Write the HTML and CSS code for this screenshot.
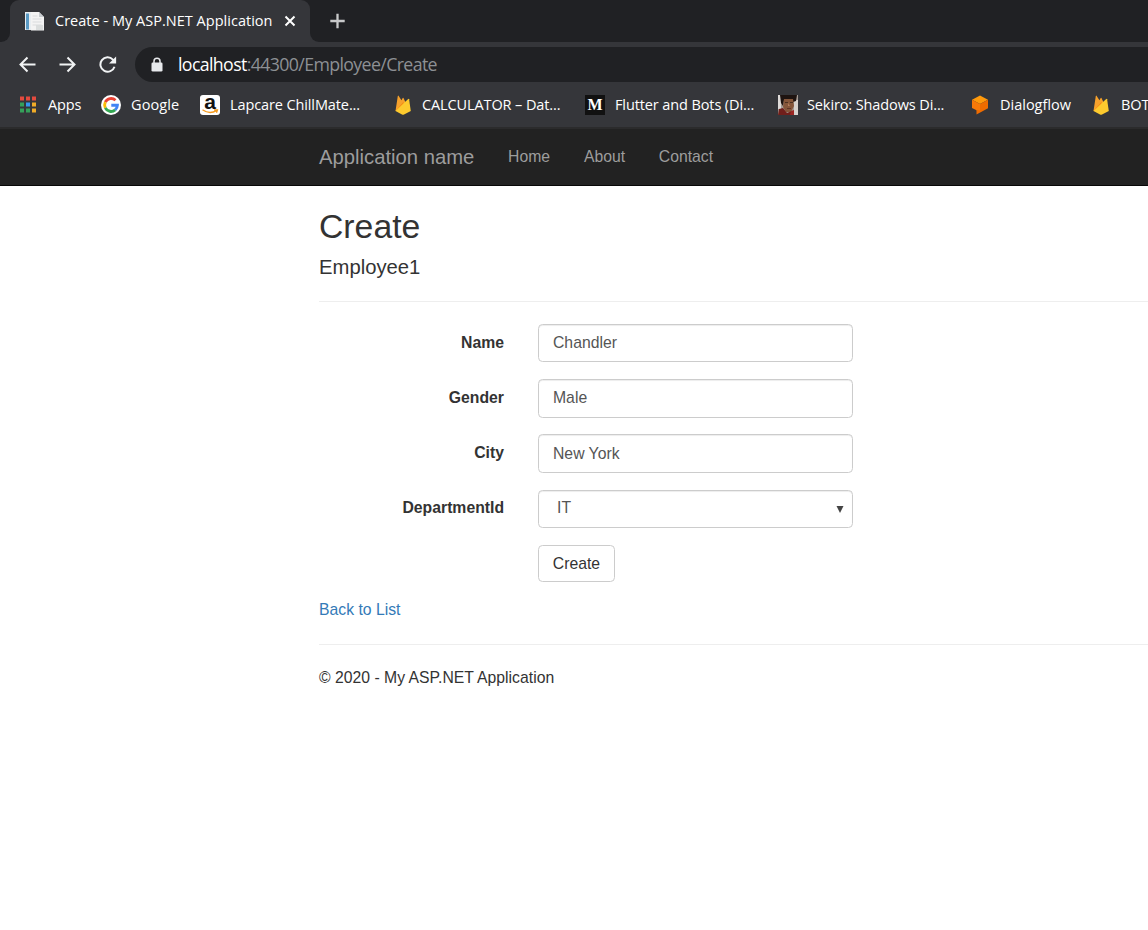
FILE: index.html
```html
<!DOCTYPE html>
<html lang="en">
<head>
<meta charset="utf-8">
<title>Create - My ASP.NET Application</title>
<link rel="stylesheet" href="styles.css">
</head>
<body>
<svg class="defs" width="0" height="0" aria-hidden="true">
  <symbol id="firebase" viewBox="0 0 20 20">
    <path d="M2.500 16 4.800 1q.3-.8.9 0L8.400 5.300l1.300-2.300q.4-.6.8 0L16.500 16z" fill="#f6a12c"/>
    <path d="M2.500 16 10.300 7 12 11z" fill="#f58a14"/>
    <path d="M2.500 16 15.200 4q.7-.5.9.3L17.800 16l-6.800 3.600q-1 .5-2 0z" fill="#fdca2e"/>
  </symbol>
</svg>
<header class="chrome">
  <div class="tabstrip">
    <div class="tab-edge"></div>
    <div class="tab">
      <svg class="page-icon" viewBox="0 0 21 20"><path d="M1 1h12v18H1z" fill="#e8edf0"/><path d="M2 2.500h3v16H2z" fill="#5a9ac4"/><path d="M7 1h8l5 5v13.500H7z" fill="#f3f3f3"/><path d="M15 1v5h5z" fill="#c8cccf"/><path d="M8.500 5h5M8.500 8h9M8.500 11h9M8.500 14h9" stroke="#dadcdd" stroke-width="1.200"/><path d="M12 14h7v5h-7z" fill="#dadddd"/></svg>
      <span class="tab-title">Create - My ASP.NET Application</span>
      <svg class="close" viewBox="0 0 12 12"><path d="M1.500 1.500l9 9M10.500 1.500l-9 9" stroke="#fff" stroke-width="2"/></svg>
    </div>
    <div class="tab-rest"><svg class="plus" viewBox="0 0 16 16"><path d="M7.500 .8v14.400M.3 8h14.400" stroke="#c8c9ca" stroke-width="2.300"/></svg></div>
  </div>
  <div class="toolbar">
    <svg class="nav-icon" viewBox="0 0 18 18"><path d="M16.500 8.500H2M8.500 1.500 1.500 8.500 8.500 15.500" fill="none" stroke="#f1f3f4" stroke-width="2"/></svg>
    <svg class="nav-icon" viewBox="0 0 18 18"><path d="M.5 8.500h15M8.500 1.500 15.500 8.500 8.500 15.500" fill="none" stroke="#f1f3f4" stroke-width="2"/></svg>
    <svg class="nav-icon" viewBox="0 0 18 18"><path d="M15.500 10.700A7.200 7.200 0 1 1 13.900 3.600L14.900 4.700" fill="none" stroke="#f1f3f4" stroke-width="2"/><path d="M17.100.5V7.600h-7.100z" fill="#f1f3f4"/></svg>
    <div class="omnibox">
      <svg class="lock" viewBox="0 0 12 15"><rect x=".5" y="5.500" width="11" height="9" rx="1.300" fill="#e8eaed"/><path d="M3 6.500V4.300a3 3 0 0 1 6 0v2.200" fill="none" stroke="#e8eaed" stroke-width="1.500"/></svg>
      <span class="url"><b>localhost</b>:44300/Employee/Create</span>
    </div>
  </div>
  <nav class="bookmarks">
    <a class="bm bm-apps"><svg viewBox="0 0 20 20"><path d="M1 1.500h4v4H1zM7 1.500h4v4H7zM13 1.500h4v4h-4z" fill="#e34a3e"/><path d="M1 7.500h4v4H1zM1 13.500h4v4H1zM7 13.500h4v4H7z" fill="#35a05a"/><path d="M7 7.500h4v4H7z" fill="#3596ee"/><path d="M13 7.500h4v4h-4zM13 13.500h4v4h-4z" fill="#f1ac27"/></svg><span>Apps</span></a>
    <a class="bm bm-google"><svg viewBox="0 0 20 20"><circle cx="10" cy="10" r="10" fill="#fff"/><g fill="none" stroke-width="2.900"><path d="M14.500 5.300A6.400 6.400 0 0 0 4.300 7.200" stroke="#ea4335"/><path d="M4.300 7.200a6.400 6.400 0 0 0 0 5.600" stroke="#fbbc05"/><path d="M4.300 12.800a6.400 6.400 0 0 0 9.900 2.100" stroke="#34a853"/><path d="M14.200 14.900A6.400 6.400 0 0 0 16.400 10.300H10.300" stroke="#4285f4"/></g></svg><span>Google</span></a>
    <a class="bm bm-lapcare"><span class="amazon"><b>a</b><svg viewBox="0 0 20 6"><path d="M2.500 .8q7 5 14 .8M14 .8h3.500l-1 3" fill="none" stroke="#f49a1e" stroke-width="1.300"/></svg></span><span>Lapcare ChillMate...</span></a>
    <a class="bm bm-calc"><svg><use href="#firebase"/></svg><span>CALCULATOR – Dat...</span></a>
    <a class="bm bm-flutter"><span class="medium">M</span><span>Flutter and Bots (Di...</span></a>
    <a class="bm bm-sekiro"><svg viewBox="0 0 20 20"><path d="M0 0h20v20H0z" fill="#a59b94"/><path d="M0 0h3v14H0z" fill="#dedbd8"/><path d="M16 5h4v15h-4z" fill="#d6d1cd"/><path d="M2 0h17l-1 6-3 1-2-3-7 1-1 6-2-3z" fill="#1e1411"/><path d="M6 4h9l1 7-3 6H8l-3-5z" fill="#85563a"/><path d="M7 7h3v1H7zm5 0h3v1h-3z" fill="#4b3021"/><path d="M10 8l2 3h-2z" fill="#b27c5c"/><path d="M9 13h4v1H9z" fill="#613627"/><path d="M1 14l4-1 4 5 5-2 2 4H0z" fill="#701f1b"/><path d="M13 16l3-1v5h-4z" fill="#9a2522"/></svg><span>Sekiro: Shadows Di...</span></a>
    <a class="bm bm-dialog"><svg viewBox="0 0 20 20"><path d="M9 .5l8 4.200-8 4.300-8-4.300z" fill="#ff9a0c"/><path d="M1 4.700 9 9v8L1 13z" fill="#f77909"/><path d="M17 4.700v8.600L5.500 19.500V15L9 15.600V9z" fill="#ef6c00"/></svg><span>Dialogflow</span></a>
    <a class="bm bm-bot"><svg><use href="#firebase"/></svg><span>BOT</span></a>
  </nav>
</header>
<div class="navbar">
  <a class="brand">Application name</a>
  <a>Home</a><a>About</a><a>Contact</a>
</div>
<main class="content">
  <h2>Create</h2>
  <h4>Employee1</h4>
  <hr>
  <form class="form">
    <label for="name">Name</label><input id="name" type="text" value="Chandler">
    <label for="gender">Gender</label><input id="gender" type="text" value="Male">
    <label for="city">City</label><input id="city" type="text" value="New York">
    <label for="dept">DepartmentId</label>
    <div class="select" id="dept"><span>IT</span><svg viewBox="0 0 8 8"><path d="M.5 1h7L4 8z" fill="#444"/></svg></div>
    <button type="button">Create</button>
  </form>
  <a class="back">Back to List</a>
  <hr class="footer-rule">
  <footer>© 2020 - My ASP.NET Application</footer>
</main>
</body>
</html>
```

FILE: styles.css
```css
* { box-sizing: border-box; }
body { margin: 0; height: 930px; overflow: hidden; background: #fff; color: #333; font: 15.75px/22.5px "Liberation Sans", Arial, sans-serif; }
.defs { position: absolute; }
svg { display: block; flex: none; }

/* Browser frame */
.chrome { height: 127px; background: #35363a; color: #fff; font: 15px/20px "Open Sans", "Noto Sans", sans-serif; overflow: hidden; }
.tabstrip { display: flex; height: 42px; background: linear-gradient(#202124 12px, #35363a 12px); }
.tab-edge { width: 10px; background: #202124; border-bottom-right-radius: 9px; }
.tab { display: flex; align-items: center; width: 300px; padding: 0 14px; background: #35363a; border-radius: 9px 9px 0 0; }
.page-icon { width: 21px; height: 20px; }
.tab-title { width: 219px; margin-left: 10px; white-space: nowrap; font-size: 14.5px; letter-spacing: 0.02px; }
.close { width: 12px; height: 12px; margin-left: 10px; }
.tab-rest { flex: 1; background: #202124; border-bottom-left-radius: 9px; padding: 13px 20px; }
.plus { width: 16px; height: 16px; }
.toolbar { display: flex; align-items: center; height: 45px; padding-left: 19px; }
.nav-icon { width: 18px; height: 18px; margin-right: 22px; }
.omnibox { display: flex; align-items: center; width: 1100px; height: 35px; flex: none; margin-left: -4px; padding-left: 16px; border-radius: 18px; background: #202124; }
.lock { width: 12px; height: 15px; }
.url { margin: -1px 0 0 15px; font-size: 17.75px; letter-spacing: -0.63px; line-height: 20px; color: #8d9094; white-space: nowrap; }
.url b { font-weight: 400; color: #fff; }
.bookmarks { display: grid; grid-template-columns: 82px 99px 193px 192px 193px 193px 120px 100px; align-items: center; height: 36px; padding-left: 19px; }
.bm { display: flex; align-items: center; white-space: nowrap; font-size: 14.5px; letter-spacing: -0.11px; }
.bm > svg, .amazon, .medium { width: 20px; height: 20px; flex: none; }
.bm > span:last-child { margin-left: 10px; }
.bm-apps > span:last-child, .bm-calc > span:last-child, .bm-sekiro > span:last-child, .bm-dialog > span:last-child { margin-left: 9px; }
.bm-google { letter-spacing: 0.1px; }
.bm-dialog { letter-spacing: 0; }
.amazon { background: #fff; color: #111; border-radius: 3px; font: bold 21px/14px "Liberation Sans", sans-serif; text-align: center; letter-spacing: 0; }
.amazon b { display: block; height: 14px; }
.amazon svg { width: 20px; height: 6px; }
.medium { background: #111; color: #fff; font: bold 16px/20px "Liberation Serif", serif; text-align: center; }

/* Site navigation */
.navbar { display: flex; height: 59px; padding: 0 0 0 319px; align-items: center; gap: 33.750px; background: #222; border-top: 2px solid #2b2b2c; border-bottom: 1px solid #080808; color: #9d9d9d; }
.brand { font-size: 20.25px; }

/* Create form */
.content { padding: 20px 0 0 319px; }
h2 { margin: 0; font-size: 33.75px; line-height: 40px; font-weight: 400; }
h4 { margin: 10px 0 0; font-size: 20.25px; line-height: 22px; font-weight: 400; }
hr { margin: 23px 0 22px; border: 0; border-top: 1px solid #eee; }
.form { display: grid; grid-template-columns: 185px 315px; column-gap: 34px; row-gap: 16.875px; padding-top: .18px; }
label { padding-top: 7.6px; text-align: right; font-weight: 700; }
input, .select { width: 315px; height: 38.250px; padding: 0 14px; border: 1px solid #ccc; border-radius: 4.500px; background: #fff; color: #555; font: inherit; box-shadow: inset 0 1px 1px rgba(0,0,0,.075); }
.select { display: flex; align-items: center; justify-content: space-between; padding: 0 8px 0 18px; }
.select svg { width: 8px; height: 8px; }
button { grid-column: 2; justify-self: start; width: 77px; height: 37px; padding: 2px 0 0; border: 1px solid #ccc; border-radius: 4.500px; background: #fff; color: #333; font: inherit; }
.back { display: block; margin-top: 17px; color: #337ab7; }
.footer-rule { margin: 22.5px 0 22px; }
```
